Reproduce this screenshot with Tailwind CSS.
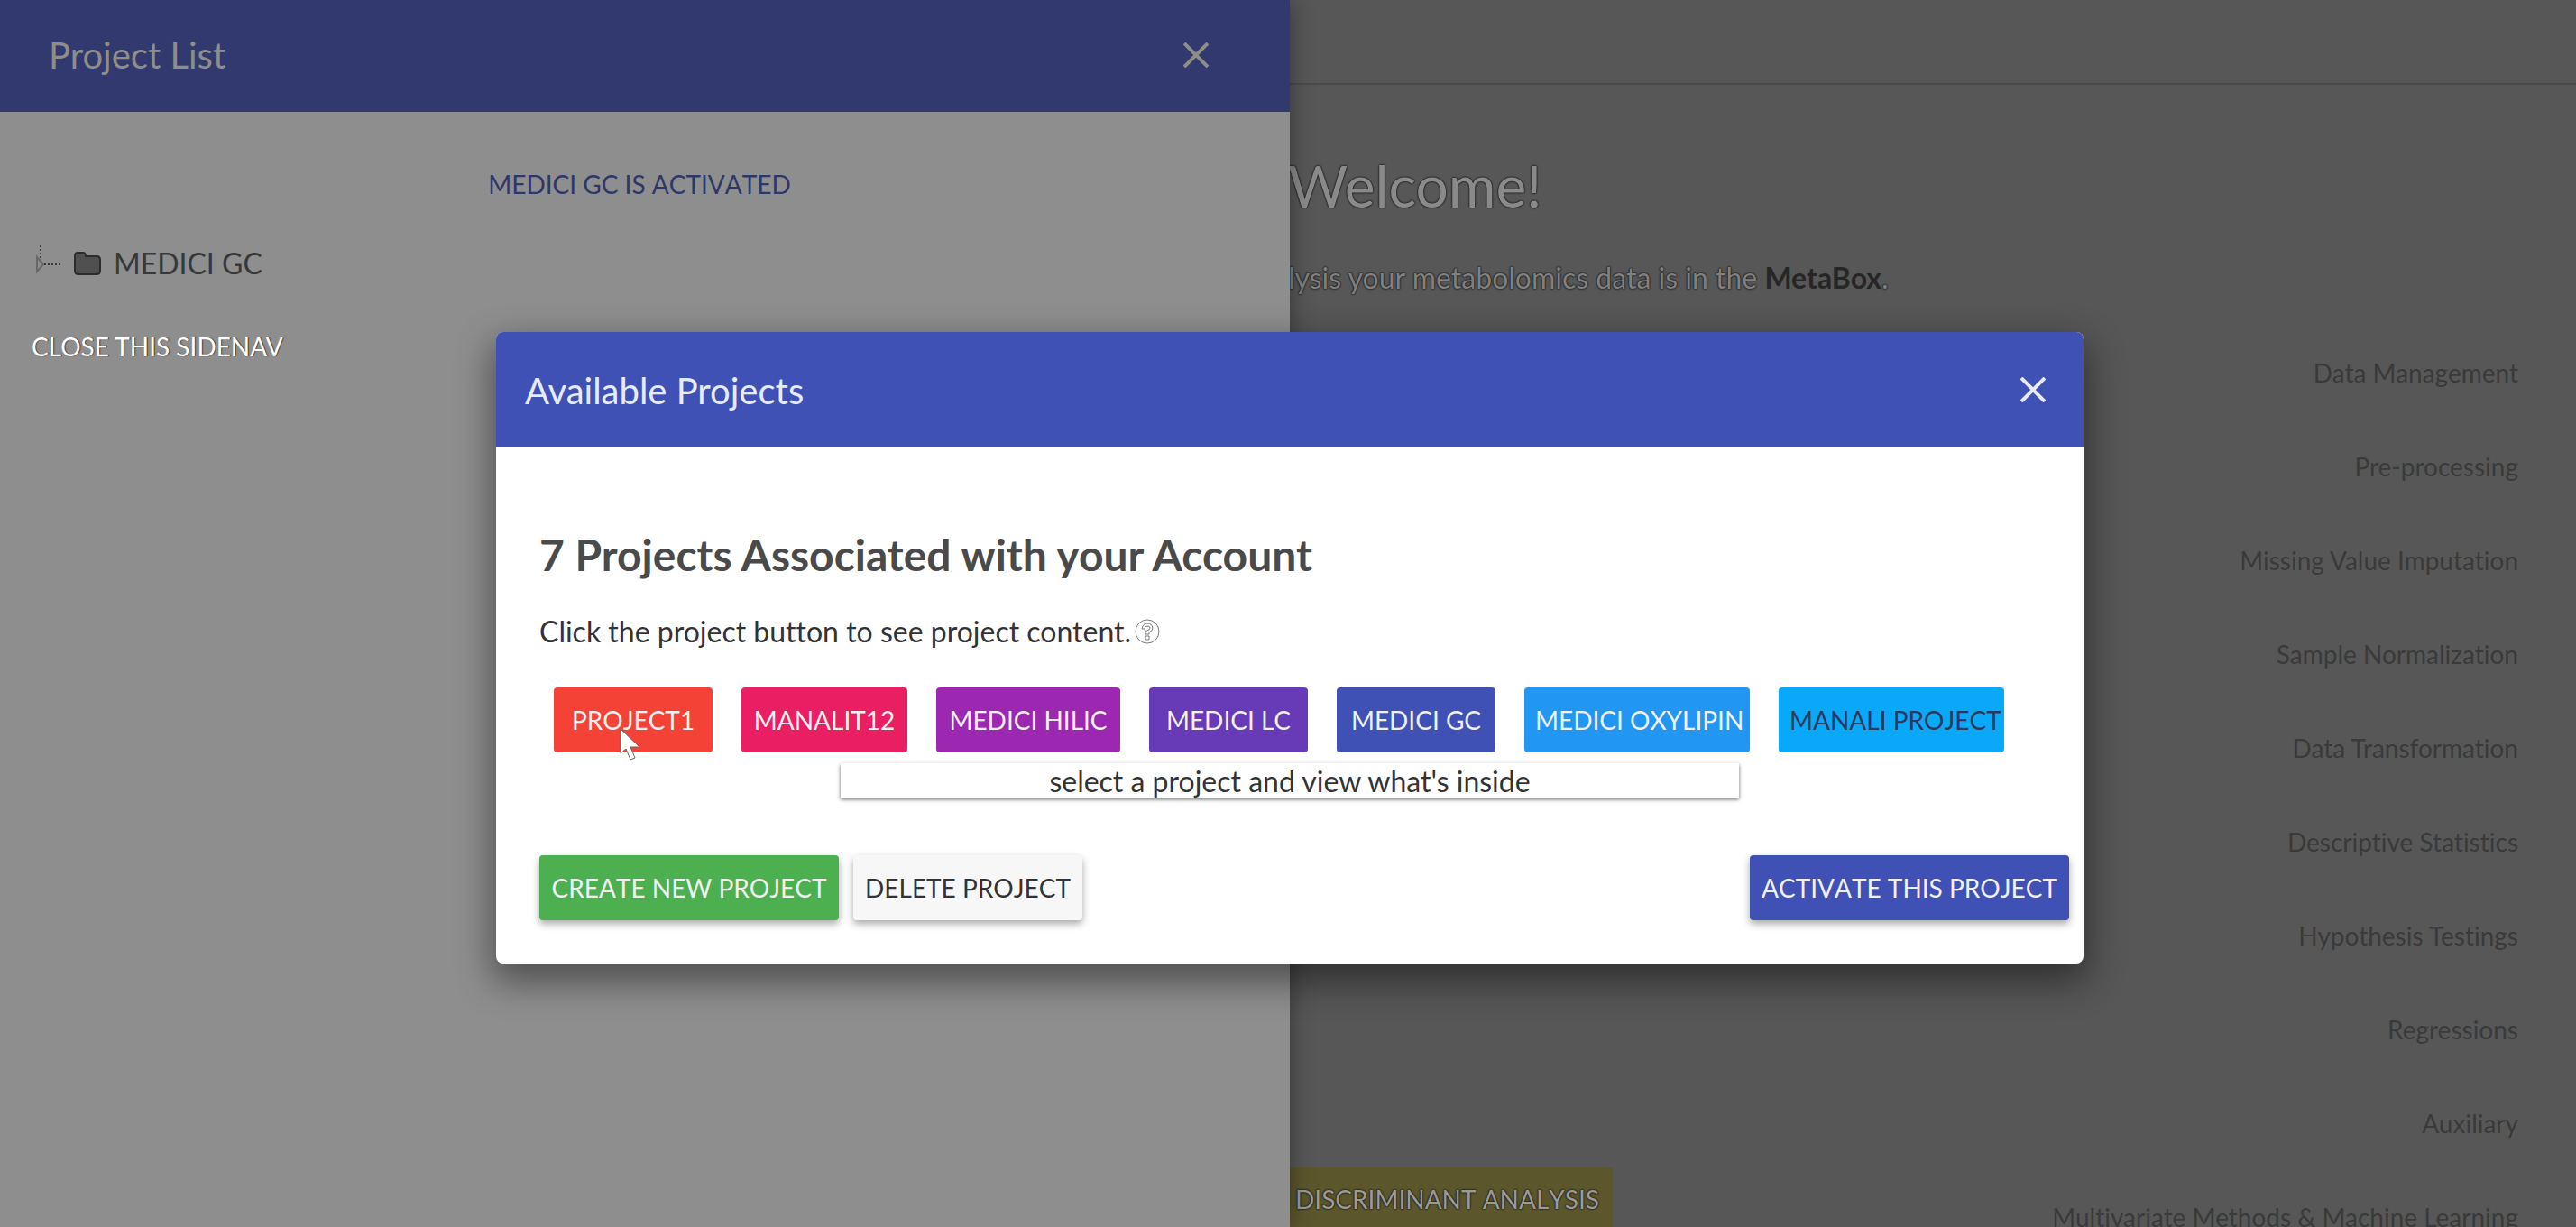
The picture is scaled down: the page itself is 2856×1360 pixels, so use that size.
<!DOCTYPE html>
<html lang="en">
<head>
<meta charset="utf-8">
<title>MetaBox</title>
<script src="https://cdn.jsdelivr.net/npm/@tailwindcss/browser@4"></script>
</head>
<body class="relative h-screen overflow-hidden bg-[#575757] font-['Lato',sans-serif] text-[32px] leading-10 text-[#333] [font-variant-ligatures:none]">

<!-- Main page, behind the backdrop -->
<main class="flex h-full flex-col">
  <div class="h-[94px] shrink-0 border-b-2 border-[#4a4a4a]"></div>
  <div class="flex min-h-0 grow pl-[50%]">
    <div class="flex grow flex-col justify-between">
      <div class="pt-[74px]">
        <h1 class="text-[64px] leading-[76px] text-[#8a8a8a] [text-shadow:0_0_2px_#111,0_0_2px_#111]">Welcome!</h1>
        <p class="pt-11 text-[#808080] [text-shadow:0_0_2px_#111,0_0_2px_#111]">lysis your metabolomics data is in the <b class="text-[#262626] [text-shadow:none]">MetaBox</b>.</p>
      </div>
      <button class="h-[66px] w-[360px] self-start rounded-tr bg-[#5b562c] pt-1 pl-2 text-left text-[28px] text-[#9a9a98] [font-kerning:none] [text-shadow:0_0_2px_#111,0_0_2px_#111]">DISCRIMINANT ANALYSIS</button>
    </div>
    <nav class="flex shrink-0 flex-col gap-16 pt-[299px] pr-16 text-right text-[28px] text-[#3a3a3a]">
      <a href="#">Data Management</a>
      <a href="#">Pre-processing</a>
      <a href="#">Missing Value Imputation</a>
      <a href="#">Sample Normalization</a>
      <a href="#">Data Transformation</a>
      <a href="#">Descriptive Statistics</a>
      <a href="#">Hypothesis Testings</a>
      <a href="#">Regressions</a>
      <a href="#">Auxiliary</a>
      <a href="#">Multivariate Methods &amp; Machine Learning</a>
    </nav>
  </div>
</main>

<!-- Side navigation -->
<aside class="absolute inset-y-0 left-0 w-[calc(50%+2px)] bg-[#8e8e8e] shadow-[0_0_24px_rgba(0,0,0,0.4)]">
  <header class="flex h-[124px] items-center justify-between bg-[#32396e] pr-[90px] pb-0.5 pl-[54px] text-[#8e8e88]">
    <h2 class="text-[40px] leading-[48px]">Project List</h2>
    <button aria-label="Close"><svg class="size-[28px]" viewBox="0 0 28 28" fill="none" stroke="currentColor" stroke-width="4"><path d="M1 1L27 27M27 1L1 27"/></svg></button>
  </header>
  <p class="pt-[60px] pr-3 text-center text-[28px] text-[#2f3769] [font-kerning:none]">MEDICI GC IS ACTIVATED</p>
  <div class="flex items-center gap-[14px] pt-12 pl-10">
    <svg class="h-10 w-7 text-[#3a3a3a]" viewBox="0 0 28 40" fill="none" stroke="currentColor"><path stroke-width="2" stroke-dasharray="2 2" d="M5 -4V14M9 21H28"/><path stroke="#686868" stroke-width="2" d="M1 13V29L8 21Z"/></svg>
    <svg class="h-7 w-[30px]" viewBox="0 0 30 28" fill="#505050" stroke="#2c2c2c" stroke-width="2"><path d="M4 2H10Q13 2 13 6H25Q29 6 29 10V22Q29 26 25 26H5Q1 26 1 22V6Q1 2 4 2Z"/></svg>
    <span class="text-[#383838]">MEDICI GC</span>
  </div>
  <button class="mt-[52px] ml-[35px] text-[28px] leading-10 text-white [text-shadow:1px_0_1px_#333]">CLOSE THIS SIDENAV</button>
</aside>

<!-- Projects dialog -->
<section role="dialog" aria-label="Available Projects" class="absolute inset-x-0 top-[368px] mx-auto w-[1760px] translate-x-0.5 rounded-lg bg-white pb-12 shadow-[0_16px_40px_4px_rgba(0,0,0,0.45)]">
  <header class="flex h-32 items-center justify-between rounded-t-lg bg-[#3f51b5] pr-[42px] pl-8 text-[#e8eaf6]">
    <h2 class="pt-0.5 text-[40px] leading-[48px]">Available Projects</h2>
    <button aria-label="Close"><svg class="size-[28px]" viewBox="0 0 28 28" fill="none" stroke="currentColor" stroke-width="4"><path d="M1 1L27 27M27 1L1 27"/></svg></button>
  </header>
  <div class="pt-[90px] pr-4 pl-12">
    <h3 class="text-[48px] leading-[58px] font-bold text-[#4a4a4a]">7 Projects Associated with your Account</h3>
    <p class="flex items-center gap-1 pt-9">Click the project button to see project content.
      <svg class="size-7" viewBox="0 0 28 28" fill="none" stroke="#777"><circle cx="14" cy="14" r="13"/><path d="M8 11Q9 5 14 5T20 10Q20 13 16 15V17H12V14Q17 12 17 10Q17 8 14 8T11 11ZM12 19H16V23H12Z"/></svg>
    </p>
    <div class="flex gap-8 pt-[42px] pl-4 text-[28px] whitespace-nowrap text-[#f0f0f0]">
      <button class="h-[72px] w-44 rounded bg-[#f44336] [font-kerning:none]">PROJECT1</button>
      <button class="h-[72px] w-[184px] rounded bg-[#e91e63] [font-kerning:none]">MANALIT12</button>
      <button class="h-[72px] w-[204px] rounded bg-[#9c27b0] [font-kerning:none]">MEDICI HILIC</button>
      <button class="h-[72px] w-44 rounded bg-[#673ab7] [font-kerning:none]">MEDICI LC</button>
      <button class="h-[72px] w-44 rounded bg-[#3f51b5] [font-kerning:none]">MEDICI GC</button>
      <button class="h-[72px] w-[250px] overflow-hidden rounded bg-[#2196f3] pl-3 text-left [font-kerning:none]">MEDICI OXYLIPIN</button>
      <button class="h-[72px] w-[250px] overflow-hidden rounded bg-[#0aa8f8] pl-3 text-left text-[#2a3a5c] [font-kerning:none]">MANALI PROJECT</button>
    </div>
  </div>
  <p class="mx-auto mt-3 h-[38px] w-[996px] text-center shadow-[0_2px_4px_rgba(0,0,0,0.6)]">select a project and view what's inside</p>
  <footer class="flex gap-4 pt-16 pr-4 pl-12 text-[28px] whitespace-nowrap text-[#f0f0f0]">
    <button class="h-[72px] w-[332px] rounded bg-[#4caf50] shadow-[0_4px_8px_rgba(0,0,0,0.35)] [font-kerning:none]">CREATE NEW PROJECT</button>
    <button class="h-[72px] w-[254px] rounded bg-[#f7f7f7] text-[#333] shadow-[0_4px_8px_rgba(0,0,0,0.35)] [font-kerning:none]">DELETE PROJECT</button>
    <button class="ml-auto h-[72px] w-[354px] rounded bg-[#3f51b5] shadow-[0_4px_8px_rgba(0,0,0,0.35)] [font-kerning:none]">ACTIVATE THIS PROJECT</button>
  </footer>
</section>

<!-- Mouse pointer -->
<svg class="absolute top-[806px] left-[687px] h-10 w-6" viewBox="0 0 24 40" fill="#fff" stroke="#666"><path d="M1 2V29L7 24L12 36L17 34L12 22H22Z"/></svg>
</body>
</html>
